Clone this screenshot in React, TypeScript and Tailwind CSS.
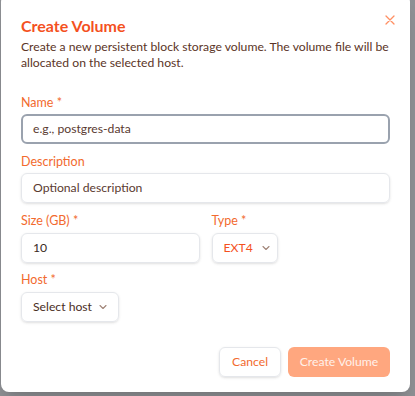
import React from 'react';

const font = { fontFamily: 'Lato, "Noto Sans", sans-serif' };

const Chevron = () => (
  <svg width="10" height="10" viewBox="0 0 10 10" fill="none" className="text-[#a08478]">
    <path d="M2 3.5 L5 6.5 L8 3.5" stroke="currentColor" strokeWidth="1.1" strokeLinecap="round" strokeLinejoin="round" />
  </svg>
);

const Label = ({ children }: { children: React.ReactNode }) => (
  <div className="text-[12.5px] leading-4 text-[#f26a2e]">{children}</div>
);

export default function App() {
  return (
    <div className="w-[415px] h-[396px] bg-[#8e9094] overflow-hidden flex" style={font}>
      <div className="ml-[1px] mt-[-6px] w-[409px] h-[398px] bg-white rounded-lg flex flex-col px-5 pt-[20px] shadow-xl">
        {/* header */}
        <div className="flex items-start justify-between">
          <h2 className="text-[16px] leading-6 font-bold text-[#f4511e]">Create Volume</h2>
          <button className="mt-[0px] mr-[-6px] text-[#ff8f63]">
            <svg width="12" height="12" viewBox="0 0 12 12" fill="none">
              <path d="M2 2 L10 10 M10 2 L2 10" stroke="currentColor" strokeWidth="1.3" strokeLinecap="round" />
            </svg>
          </button>
        </div>
        <p className="mt-[1px] text-[12.2px] leading-4 text-[#5b3426]">
          Create a new persistent block storage volume. The volume file will be allocated on the selected host.
        </p>

        {/* name */}
        <div className="mt-6">
          <Label>Name *</Label>
          <div className="mt-[3px] h-[30px] rounded-md border-2 border-[#9aa2ae] flex items-center px-[10px] text-[12.2px] text-[#5a3a30]">
            e.g., postgres-data
          </div>
        </div>

        {/* description */}
        <div className="mt-[10px]">
          <Label>Description</Label>
          <div className="mt-[3px] h-[30px] rounded-md border border-[#e5e7eb] shadow-sm flex items-center px-[11px] text-[12.2px] text-[#5a3a30]">
            Optional description
          </div>
        </div>

        {/* size + type */}
        <div className="mt-[10px] grid grid-cols-2 gap-3">
          <div>
            <Label>Size (GB) *</Label>
            <div className="mt-[4px] h-[30px] rounded-md border border-[#e5e7eb] shadow-sm flex items-center px-[11px] text-[12.2px] text-[#3a2a24]">
              10
            </div>
          </div>
          <div>
            <Label>Type *</Label>
            <div className="mt-[4px] h-[30px] w-[66px] rounded-md border border-[#e5e7eb] shadow-sm flex items-center gap-[8px] pl-[11px] text-[12.2px] text-[#f4511e]">
              EXT4
              <Chevron />
            </div>
          </div>
        </div>

        {/* host */}
        <div className="mt-[9px]">
          <Label>Host *</Label>
          <div className="mt-[4px] h-[30px] w-[98px] rounded-md border border-[#e5e7eb] shadow-sm flex items-center gap-[6px] pl-[11px] text-[12.2px] text-[#4a2e24]">
            Select host
            <Chevron />
          </div>
        </div>

        {/* footer */}
        <div className="mt-[25px] flex justify-end gap-[7px]">
          <button className="h-[30px] w-[62px] rounded-md border border-[#e5e7eb] shadow-sm text-[12.2px] text-[#f26a2e]">
            Cancel
          </button>
          <button className="h-[30px] w-[102px] rounded-md bg-[#ffa77f] text-[12.2px] text-[#fff1ea]">
            Create Volume
          </button>
        </div>
      </div>
    </div>
  );
}
